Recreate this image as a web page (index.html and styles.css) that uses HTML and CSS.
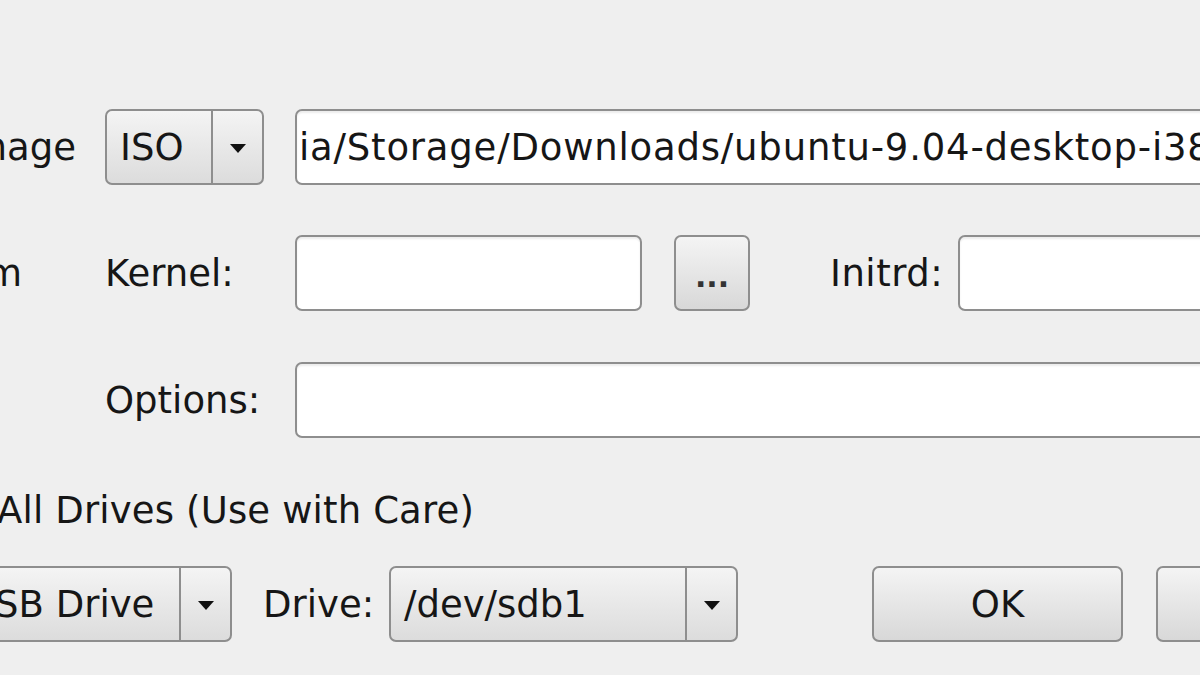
FILE: index.html
```html
<!DOCTYPE html>
<html>
<head>
<meta charset="utf-8">
<link rel="stylesheet" href="styles.css">
</head>
<body>
<div class="page">
  <div class="row r1">
    <div class="clip w76"><span class="radio"></span><span class="lbl">Diskimage</span></div>
    <div class="combo iso"><div class="cval">ISO</div><div class="carrow"><span class="tri"></span></div></div>
    <div class="field wide"><span class="ftext">ia/Storage/Downloads/ubuntu-9.04-desktop-i386.iso</span></div>
  </div>
  <div class="row r2">
    <div class="clip w76 lw"><span class="radio"></span><span class="lbl">Custom</span></div>
    <div class="lbl klabel">Kernel:</div>
    <div class="field kernel"></div>
    <div class="btn dots">...</div>
    <div class="lbl ilabel">Initrd:</div>
    <div class="field wide"></div>
  </div>
  <div class="row r3">
    <div class="w76"></div>
    <div class="lbl olabel">Options:</div>
    <div class="field wide"></div>
  </div>
  <div class="row r4">
    <div class="clip w472"><span class="check"></span><span class="lbl spaced">Show All Drives (Use with Care)</span></div>
  </div>
  <div class="row r5">
    <div class="clip w232"><span class="lbl">Type:</span><div class="combo usb"><div class="cval">USB Drive</div><div class="carrow"><span class="tri"></span></div></div></div>
    <div class="lbl dlabel">Drive:</div>
    <div class="combo sdb"><div class="cval">/dev/sdb1</div><div class="carrow"><span class="tri"></span></div></div>
    <div class="btn ok">OK</div>
    <div class="btn cancel">Cancel</div>
  </div>
</div>
</body>
</html>
```

FILE: styles.css
```css
html, body {
  margin: 0;
  padding: 0;
  background: #efefef;
  overflow: hidden;
  width: 1200px;
  height: 675px;
}
.page {
  font-family: "DejaVu Sans", Verdana, sans-serif;
  font-size: 37px;
  color: #161616;
  padding-top: 109px;
  display: flex;
  flex-direction: column;
}
.row {
  display: flex;
  align-items: center;
  height: 76px;
  flex-shrink: 0;
  white-space: nowrap;
}
.r2 { margin-top: 50px; }
.r3 { margin-top: 51px; }
.r4 { margin-top: 47px; height: 50px; }
.r5 { margin-top: 31px; }

.clip {
  display: flex;
  align-items: center;
  justify-content: flex-end;
  overflow: hidden;
  height: 100%;
  flex-shrink: 0;
}
.w76 { width: 76px; flex-shrink: 0; }
.lw { width: 22px; margin-right: 54px; }
.w472 { width: 474px; }
.spaced { letter-spacing: 0.15px; }
.w232 { width: 232px; align-items: center; }
.lbl { flex-shrink: 0; }
.radio, .check {
  width: 28px; height: 28px;
  border: 2px solid #888;
  background: #fff;
  margin-right: 12px;
  flex-shrink: 0;
}
.radio { border-radius: 50%; }
.check { border-radius: 4px; }

.combo {
  display: flex;
  height: 76px;
  box-sizing: border-box;
  border: 2px solid #8e8e8e;
  border-radius: 7px;
  background: linear-gradient(#f4f4f4, #dcdcdc);
  flex-shrink: 0;
}
.cval {
  flex: 1;
  display: flex;
  align-items: center;
  padding-left: 13px;
}
.carrow {
  width: 49px;
  border-left: 2px solid #8e8e8e;
  display: flex;
  align-items: center;
  justify-content: center;
}
.tri {
  width: 0; height: 0;
  border-left: 8px solid transparent;
  border-right: 8px solid transparent;
  border-top: 9px solid #111;
  margin-top: 2px;
}
.iso { width: 159px; margin-left: 29px; }
.usb { width: 279px; margin-left: 10px; }
.sdb { width: 349px; margin-left: 17px; }

.field {
  height: 76px;
  box-sizing: border-box;
  border: 2px solid #8e8e8e;
  border-radius: 7px;
  background: #fff;
  box-shadow: inset 0 2px 2px rgba(0,0,0,0.08);
  display: flex;
  align-items: center;
  flex-shrink: 0;
  overflow: hidden;
}
.r1 .field { margin-left: 31px; }
.ftext { padding-left: 2px; letter-spacing: 0.8px; }
.wide { width: 1000px; }
.kernel { width: 347px; }
.klabel { width: 190px; margin-left: 29px; }
.olabel { width: 190px; margin-left: 29px; }
.ilabel { width: 116px; margin-left: 80px; margin-right: 12px; letter-spacing: 0.5px; }

.btn {
  height: 76px;
  box-sizing: border-box;
  border: 2px solid #8e8e8e;
  border-radius: 7px;
  background: linear-gradient(#f4f4f4, #d8d8d8);
  display: flex;
  align-items: center;
  justify-content: center;
  flex-shrink: 0;
}
.dots { width: 76px; margin-left: 32px; font-size: 30px; font-weight: bold; padding-top: 6px; color: #333; }
.dlabel { width: 109px; margin-left: 31px; }
.ok { width: 251px; margin-left: 134px; }
.cancel { width: 251px; margin-left: 33px; }
```
